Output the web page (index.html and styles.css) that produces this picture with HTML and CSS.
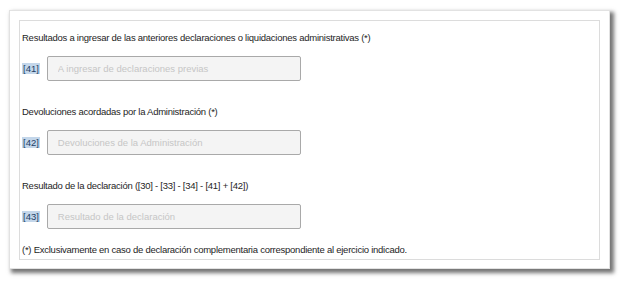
FILE: index.html
```html
<!DOCTYPE html>
<html lang="es">
<head>
  <meta charset="UTF-8" />
  <title>Resultado de la declaración</title>
  <link rel="stylesheet" href="styles.css">
</head>
<body>
  <div class="card">
    <div class="panel">
      <div class="field-group">
        <p class="field-title">Resultados a ingresar de las anteriores declaraciones o liquidaciones administrativas (*)</p>
        <div class="field-row">
          <span class="box-code">[41]</span>
          <input type="text" class="box-input" placeholder="A ingresar de declaraciones previas" disabled>
        </div>
      </div>

      <div class="field-group">
        <p class="field-title">Devoluciones acordadas por la Administración (*)</p>
        <div class="field-row">
          <span class="box-code">[42]</span>
          <input type="text" class="box-input" placeholder="Devoluciones de la Administración" disabled>
        </div>
      </div>

      <div class="field-group">
        <p class="field-title">Resultado de la declaración ([30] - [33] - [34] - [41] + [42])</p>
        <div class="field-row">
          <span class="box-code">[43]</span>
          <input type="text" class="box-input" placeholder="Resultado de la declaración" disabled>
        </div>
      </div>

      <p class="footnote">(*) Exclusivamente en caso de declaración complementaria correspondiente al ejercicio indicado.</p>
    </div>
  </div>
</body>
</html>
```

FILE: styles.css
```css
* {
  box-sizing: border-box;
}

body {
  margin: 0;
  padding-bottom: 10px;
  background: #fff;
  font-family: 'Liberation Sans', Arial, sans-serif;
  font-size: 9.5px;
  color: #1e1e1e;
}

.card {
  margin: 10px 0 0 9px;
  width: 601px;
  padding: 9px 9px 8px;
  background: #fff;
  border: 1px solid #e2e2e2;
  box-shadow: 3px 3px 4px 1px rgba(0, 0, 0, 0.55);
}

.panel {
  height: 240px;
  border: 1px solid #dcdcdc;
  padding: 10px 2px 0;
}

.field-group {
  display: flex;
  flex-direction: column;
  gap: 11px;
  margin-bottom: 24px;
}

.field-title,
.footnote {
  margin: 0;
  line-height: 14px;
  letter-spacing: -0.25px;
}

.field-row {
  display: flex;
  align-items: center;
  gap: 7px;
}

.box-code {
  background: #c3d6ea;
  color: #1f3f66;
  line-height: 11px;
  padding: 0 1px;
}

.box-input {
  width: 254px;
  height: 25px;
  margin: 0;
  padding: 0 10px;
  font-family: inherit;
  font-size: 9.5px;
  background: #f4f4f4;
  border: 1px solid #a9a9a9;
  border-radius: 2px;
}

.box-input::placeholder {
  color: #c6c6c6;
}

.footnote {
  margin-top: -10px;
}
```
